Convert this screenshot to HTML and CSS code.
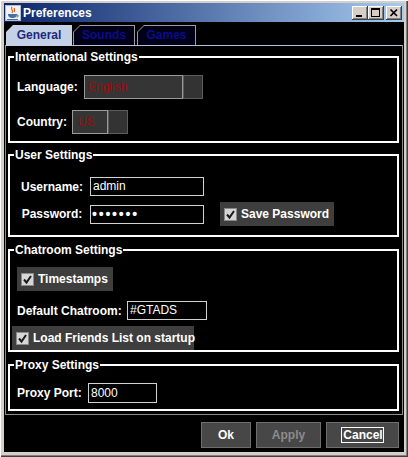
FILE: index.html
```html
<!DOCTYPE html>
<html>
<head>
<meta charset="utf-8">
<title>Preferences</title>
<link rel="stylesheet" href="styles.css">
</head>
<body>
<div class="window">
  <div class="titlebar">
    <svg class="app-icon" width="16" height="16" viewBox="0 0 16 16">
      <rect x="0.5" y="0.5" width="15" height="15" fill="#f2f2f2" stroke="#b8b8c8"/>
      <path d="M7 2 C5 4 9 5 7 8 M9.5 3 C8.5 4.5 10.5 5 9 7" fill="none" stroke="#e05a10" stroke-width="1.2"/>
      <path d="M3 9 H12 C12 12 10 13 7.5 13 C5 13 3 12 3 9 Z" fill="#4a6fa5"/>
      <path d="M12 10 C14 10 14 12 11.5 12" fill="none" stroke="#4a6fa5" stroke-width="1"/>
      <rect x="2" y="14" width="11" height="1" fill="#4a6fa5"/>
    </svg>
    <span class="title">Preferences</span>
    <div class="wbtns">
      <span class="wbtn"><svg width="16" height="14" viewBox="0 0 16 14"><rect x="4" y="9" width="6" height="2" fill="#000"/></svg></span>
      <span class="wbtn"><svg width="16" height="14" viewBox="0 0 16 14"><rect x="3.5" y="2.5" width="8" height="8" fill="none" stroke="#000"/><rect x="3" y="2" width="9" height="2" fill="#000"/></svg></span>
      <span class="wbtn close"><svg width="16" height="14" viewBox="0 0 16 14"><path d="M4.5 3.5 L11 10 M11 3.5 L4.5 10" stroke="#000" stroke-width="1.7"/></svg></span>
    </div>
  </div>
  <div class="client">
    <div class="tabs">
      <div class="tab active t-general"><span>General</span></div>
      <div class="tab t-sounds"><span>Sounds</span></div>
      <div class="tab t-games"><span>Games</span></div>
    </div>
    <div class="tabpanel">
      <fieldset class="group g-intl">
        <legend>International Settings</legend>
        <div class="gbody stack-intl">
          <div class="row">
            <span class="lbl l-lang">Language:</span>
            <div class="combo"><span class="combo-text c-lang">English</span><span class="combo-btn"></span></div>
          </div>
          <div class="row">
            <span class="lbl l-country">Country:</span>
            <div class="combo"><span class="combo-text c-country">US</span><span class="combo-btn"></span></div>
          </div>
        </div>
      </fieldset>

      <fieldset class="group g-user">
        <legend>User Settings</legend>
        <div class="gbody ugrid">
          <span class="lbl ulbl">Username:</span>
          <span class="field f-user">admin</span>
          <span></span>
          <span class="lbl ulbl">Password:</span>
          <span class="field f-pass">&bull;&bull;&bull;&bull;&bull;&bull;&bull;</span>
          <span class="chk c-save">
            <svg class="cb" width="13" height="13" viewBox="0 0 13 13"><rect x="0.5" y="0.5" width="12" height="12" fill="#d6d6d6" stroke="#8a8a8a"/><path d="M3 6.5 L5.5 9.5 L10 3" fill="none" stroke="#1a1a1a" stroke-width="2"/></svg>
            <span>Save Password</span>
          </span>
        </div>
      </fieldset>

      <fieldset class="group g-chat">
        <legend>Chatroom Settings</legend>
        <div class="gbody stack-chat">
          <span class="chk c-time">
            <svg class="cb" width="13" height="13" viewBox="0 0 13 13"><rect x="0.5" y="0.5" width="12" height="12" fill="#d6d6d6" stroke="#8a8a8a"/><path d="M3 6.5 L5.5 9.5 L10 3" fill="none" stroke="#1a1a1a" stroke-width="2"/></svg>
            <span>Timestamps</span>
          </span>
          <div class="row row-room">
            <span class="lbl l-room">Default Chatroom:</span>
            <span class="field f-room">#GTADS</span>
          </div>
          <span class="chk c-load">
            <svg class="cb" width="13" height="13" viewBox="0 0 13 13"><rect x="0.5" y="0.5" width="12" height="12" fill="#d6d6d6" stroke="#8a8a8a"/><path d="M3 6.5 L5.5 9.5 L10 3" fill="none" stroke="#1a1a1a" stroke-width="2"/></svg>
            <span>Load Friends List on startup</span>
          </span>
        </div>
      </fieldset>

      <fieldset class="group g-proxy">
        <legend>Proxy Settings</legend>
        <div class="gbody">
          <div class="row row-proxy">
            <span class="lbl l-proxy">Proxy Port:</span>
            <span class="field f-proxy">8000</span>
          </div>
        </div>
      </fieldset>
    </div>
    <div class="actions">
      <button class="btn b-ok">Ok</button>
      <button class="btn b-apply">Apply</button>
      <button class="btn b-cancel"><span class="focus">Cancel</span></button>
    </div>
  </div>
</div>
</body>
</html>
```

FILE: styles.css
```css
* { box-sizing: border-box; }
html, body { margin: 0; padding: 0; background: #d4d0c8; }
body { font-family: "Liberation Sans", Arial, sans-serif; font-size: 12px; }

.window {
  width: 408px; height: 457px;
  background: #d4d0c8;
  padding: 3px 4px 5px 4px;
  display: flex; flex-direction: column;
  box-shadow: inset 1px 1px #ffffff, inset -1px -1px #404040, inset -2px -2px #808080;
}

.titlebar {
  height: 19px; flex: none;
  display: flex; align-items: center;
  padding: 0 2px 0 1px;
  background: linear-gradient(to right, #0a246a, #a6caf0);
  color: #fff;
}
.app-icon { flex: none; margin-right: 2px; }
.title { font-weight: bold; font-size: 12px; }
.wbtns { margin-left: auto; display: flex; }
.wbtn {
  width: 16px; height: 14px; display: block;
  background: #d4d0c8;
  box-shadow: inset -1px -1px #404040, inset 1px 1px #ffffff, inset -2px -2px #808080;
}
.wbtn svg { display: block; }
.wbtn.close { margin-left: 2px; }

.client {
  flex: 1; background: #000;
  display: flex; flex-direction: column;
}

.tabs { display: flex; height: 20px; margin: 3px 0 0 2px; flex: none; }
.tab {
  height: 20px; padding: 1px 1px 0 1px;
  background: #9c9c9c;
  clip-path: polygon(0 7px, 7px 0, 100% 0, 100% 100%, 0 100%);
}
.tab span {
  display: block; height: 100%;
  background: #000018;
  clip-path: polygon(0 6px, 6px 0, 100% 0, 100% 100%, 0 100%);
  font-weight: bold; font-size: 12px; line-height: 19px;
  color: #0c0c8c; text-align: center;
}
.tab.active { background: #c4d1e7; position: relative; z-index: 1; height: 21px; }
.tab.active span { background: #c4d1e7; color: #1b2a7c; }
.t-general { width: 66px; }
.t-sounds { width: 62px; margin-left: 1px; }
.t-games { width: 59px; margin-left: 2px; }

.tabpanel {
  flex: none;
  margin: 0 1px;
  height: 370px;
  border: 1px solid #8c8c8c;
  border-top-color: #b4c1da;
  padding: 0 3px 0 2px;
}

.group {
  margin: 0;
  border: 2px solid #ffffff;
  min-width: 0;
  color: #fff;
}
.group legend {
  padding: 0 1px;
  font-weight: bold; font-size: 12px; line-height: 14px;
  color: #fff;
}
.gbody { padding-left: 3px; }
.g-intl { margin-top: 4px; padding: 11px 0 7px 4px; }
.g-user { margin-top: 5px; padding: 15px 0 9px 4px; }
.g-chat { margin-top: 6px; padding: 10px 0 0 4px; }
.g-proxy { margin-top: 6px; padding: 11px 0 6px 4px; }

.lbl { font-weight: bold; font-size: 12px; color: #fff; white-space: nowrap; }
.row { display: flex; align-items: center; }

.stack-intl { display: flex; flex-direction: column; gap: 11px; }
.stack-intl .row { height: 24px; }
.l-lang { width: 67px; }
.l-country { width: 55px; }
.combo { display: flex; height: 24px; }
.combo-text {
  height: 24px;
  background: #353535;
  border: 1px solid #9a9a9a;
  color: #a00a0a;
  font-size: 12px; line-height: 22px;
  padding-left: 3px;
}
.c-lang { width: 99px; }
.c-country { width: 36px; padding-left: 5px; }
.combo-btn { width: 20px; height: 24px; background: #333; border: 1px solid #5c5c5c; }

.field {
  display: block;
  height: 19px;
  background: #000;
  border: 1px solid #d2d2d2;
  color: #fff;
  font-size: 12px; line-height: 17px;
  padding-left: 2px;
  white-space: nowrap; overflow: hidden;
}

.ugrid {
  display: grid;
  grid-template-columns: 70px 114px auto;
  grid-template-rows: 19px 24px;
  column-gap: 3px; row-gap: 6px;
  align-items: center;
}
.ulbl { justify-self: center; }
.f-pass { font-size: 14px; font-weight: bold; letter-spacing: 1.8px; line-height: 16px; padding-left: 1px; }

.chk {
  display: flex; align-items: center; gap: 4px;
  height: 24px; padding-left: 4px;
  background: #3e3e3e;
  font-weight: bold; font-size: 12px; color: #fff;
  white-space: nowrap;
}
.cb { flex: none; display: block; }
.c-save { width: 114px; margin-left: 13px; }
.c-time { width: 96px; }
.c-load { width: 182px; margin-left: -5px; }

.stack-chat { display: flex; flex-direction: column; align-items: flex-start; }
.row-room { margin-top: 10px; height: 19px; }
.l-room { width: 110px; }
.f-room { width: 80px; }
.c-load { margin-top: 6px; }

.row-proxy { height: 20px; }
.l-proxy { width: 71px; }
.f-proxy { width: 69px; height: 20px; line-height: 18px; }

.actions {
  flex: none;
  display: flex; justify-content: flex-end; gap: 5px;
  margin-top: 7px; padding-right: 5px;
  height: 26px;
}
.btn {
  height: 26px; padding: 0; margin: 0;
  background: #474747;
  border: 1px solid #6e6e6e;
  font-family: "Liberation Sans", Arial, sans-serif;
  font-weight: bold; font-size: 12px;
  color: #fff;
}
.b-ok { width: 50px; }
.b-apply { width: 65px; color: #8c8c8c; }
.b-cancel { width: 73px; }
.focus { display: inline-block; border: 1px solid #fff; line-height: 14px; padding: 0 0 0 1px; }
```
